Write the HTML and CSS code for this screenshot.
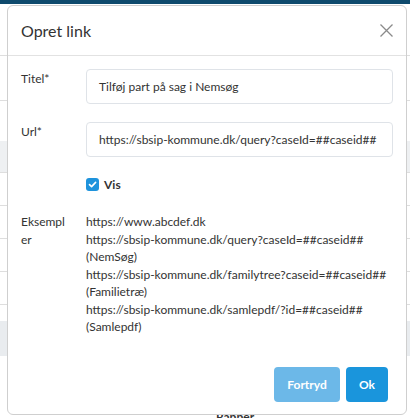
FILE: index.html
```html
<!DOCTYPE html>
<html lang="da">
<head>
<meta charset="utf-8">
<title>Opret link</title>
<link rel="stylesheet" href="styles.css">
</head>
<body>
<div class="page">
  <div class="topbar"></div>
  <div class="row r1"></div>
  <div class="row r2"></div>
  <div class="row r3"></div>
  <div class="row band"></div>
  <div class="row r4"></div>
  <div class="row r4"></div>
  <div class="row r4"></div>
  <div class="row r4"></div>
  <div class="row r5"></div>
  <div class="row band2"></div>
  <div class="row r6"><span class="bg-text">Rapper</span></div>
</div>

<div class="modal">
  <div class="modal-header">
    <h2 class="modal-title">Opret link</h2>
    <button class="close" aria-label="Luk">
      <svg width="13" height="13" viewBox="0 0 13 13"><path d="M0.5 0.5 L12.5 12.5 M12.5 0.5 L0.5 12.5" stroke="#8a8a8a" stroke-width="1.3" fill="none"/></svg>
    </button>
  </div>
  <div class="modal-body">
    <div class="form-row">
      <label class="label">Titel*</label>
      <div class="input">Tilføj part på sag i Nemsøg</div>
    </div>
    <div class="form-row">
      <label class="label">Url*</label>
      <div class="input">https://sbsip-kommune.dk/query?caseId=##caseid##</div>
    </div>
    <div class="check-row">
      <span class="checkbox">
        <svg width="9" height="9" viewBox="0 0 9 9"><path d="M1.5 4.6 L3.6 6.6 L7.6 2.4" stroke="#fff" stroke-width="1.6" fill="none" stroke-linecap="round" stroke-linejoin="round"/></svg>
      </span>
      <span class="check-label">Vis</span>
    </div>
    <div class="examples-row">
      <div class="label ex-label">Eksempler</div>
      <div class="examples">
        <div>https://www.abcdef.dk</div>
        <div>https://sbsip-kommune.dk/query?caseId=##caseid##</div>
        <div>(NemSøg)</div>
        <div>https://sbsip-kommune.dk/familytree?caseid=##caseid##</div>
        <div>(Familietræ)</div>
        <div>https://sbsip-kommune.dk/samlepdf/?id=##caseid##</div>
        <div>(Samlepdf)</div>
      </div>
    </div>
  </div>
  <div class="modal-footer">
    <button class="btn btn-light">Fortryd</button>
    <button class="btn btn-primary">Ok</button>
  </div>
</div>
</body>
</html>
```

FILE: styles.css
```css
* { box-sizing: border-box; }
html, body { margin: 0; padding: 0; }
body {
  width: 410px;
  height: 418px;
  overflow: hidden;
  font-family: Lato, "Open Sans", sans-serif;
  color: #333;
  background: #fff;
  position: relative;
}

.page { display: flex; flex-direction: column; }
.topbar { height: 4px; background: #0e4a6d; }
.row { border-bottom: 1px solid #dedede; }
.r1 { height: 52px; }
.r2 { height: 45px; }
.r3 { height: 40px; border-bottom: none; }
.band { height: 32px; background: #eef0f2; }
.r4 { height: 33px; }
.r5 { height: 16px; border-bottom: none; }
.band2 { height: 35px; background: #e9ecef; border-bottom: none; }
.r6 { height: 70px; border-bottom: none; display: flex; justify-content: center; padding-top: 53px; padding-left: 60px; }
.bg-text { font-weight: 700; font-size: 12px; color: #333; }

.modal {
  position: absolute;
  left: 7px;
  top: 5px;
  width: 400px;
  height: 410px;
  background: #fff;
  border: 1px solid #cfcfcf;
  border-radius: 6px;
  display: flex;
  flex-direction: column;
}

.modal-header {
  height: 50px;
  border-bottom: 1px solid #e2e2e2;
  display: flex;
  align-items: center;
  justify-content: space-between;
  padding: 0 13px 0 13px;
}
.modal-title {
  margin: 0;
  font-size: 16px;
  font-weight: 400;
  color: #333;
}
.close {
  border: none;
  background: none;
  padding: 0;
  width: 13px;
  height: 13px;
  display: flex;
}

.modal-body {
  padding: 13px 13px 0 13px;
  display: flex;
  flex-direction: column;
  font-size: 12px;
}

.form-row {
  display: flex;
  margin-bottom: 18px;
}
.label {
  width: 65px;
  flex: none;
  padding-top: 1px;
  padding-right: 17px;
  font-size: 12px;
  line-height: 17.5px;
  overflow-wrap: anywhere;
}
.input {
  flex: 1;
  height: 35px;
  border: 1px solid #dfe3e8;
  border-radius: 4px;
  padding: 0 12px;
  display: flex;
  align-items: center;
  font-size: 12px;
  white-space: nowrap;
  overflow: hidden;
}

.check-row {
  display: flex;
  align-items: center;
  gap: 5px;
  margin-left: 65px;
  height: 18px;
}
.checkbox {
  width: 13px;
  height: 13px;
  border-radius: 3px;
  background: #1e93dc;
  display: flex;
  align-items: center;
  justify-content: center;
}
.check-label { font-weight: 700; font-size: 12px; }

.examples-row {
  display: flex;
  margin-top: 20px;
}
.ex-label { padding-top: 0; }
.examples {
  font-size: 12px;
  line-height: 17.5px;
}

.modal-footer {
  margin-top: auto;
  display: flex;
  justify-content: flex-end;
  gap: 6px;
  padding: 0 18px 12px 0;
}
.btn {
  height: 35px;
  border: none;
  border-radius: 4px;
  color: #fff;
  font-family: Lato, sans-serif;
  font-weight: 700;
  font-size: 12px;
  padding: 0;
}
.btn-light { background: #6cb8e8; width: 66px; }
.btn-primary { background: #1a95dc; width: 42px; }
```
